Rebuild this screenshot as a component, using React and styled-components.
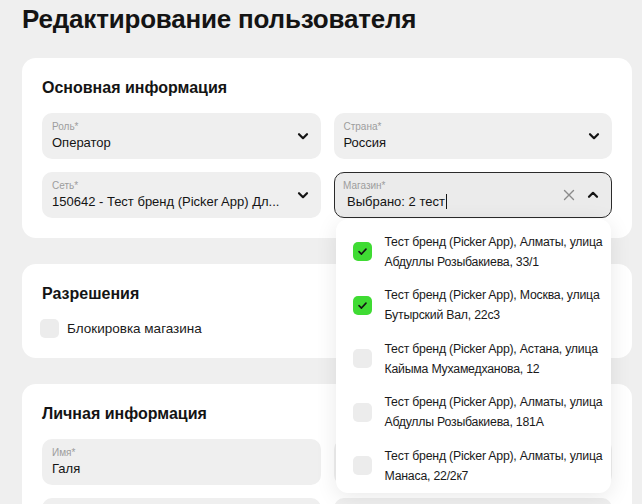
import React from "react";
import styled, { createGlobalStyle } from "styled-components";

const GlobalStyle = createGlobalStyle`
  html, body {
    margin: 0;
    padding: 0;
    background: #efefef;
    font-family: "Liberation Sans", Arial, sans-serif;
    color: #151515;
    overflow: hidden;
  }
`;

const STORES = [
  { name: "Тест бренд (Picker App), Алматы, улица", addr: "Абдуллы Розыбакиева, 33/1", checked: true },
  { name: "Тест бренд (Picker App), Москва, улица", addr: "Бутырский Вал, 22с3", checked: true },
  { name: "Тест бренд (Picker App), Астана, улица", addr: "Кайыма Мухамедханова, 12", checked: false },
  { name: "Тест бренд (Picker App), Алматы, улица", addr: "Абдуллы Розыбакиева, 181А", checked: false },
  { name: "Тест бренд (Picker App), Алматы, улица", addr: "Манаса, 22/2к7", checked: false },
];

const Page = styled.div`
  padding: 0 10px 0 22px;
`;

const Title = styled.h1`
  margin: 3px 0 23px;
  font-size: 26px;
  line-height: 32px;
  font-weight: 700;
  letter-spacing: -0.2px;
  color: #141414;
`;

const Card = styled.section`
  background: #fff;
  border-radius: 14px;
  padding: 20px;
  margin-bottom: 26px;
`;

const CardTitle = styled.h2`
  margin: 0 0 15px;
  font-size: 16px;
  line-height: 20px;
  font-weight: 700;
  color: #141414;
`;

const Grid = styled.div`
  display: grid;
  grid-template-columns: 1fr 1fr;
  gap: 13px;
`;

const FieldWrap = styled.div`
  position: relative;
`;

const Field = styled.div`
  height: 46px;
  box-sizing: border-box;
  display: flex;
  align-items: center;
  gap: 10px;
  padding: 0 11px 0 10px;
  border-radius: 10px;
  background: ${(p) => (p.$active ? "#ebebeb" : "#efefef")};
  border: ${(p) => (p.$active ? "1.5px solid #2b2b2b" : "none")};
  padding-left: ${(p) => (p.$active ? "8.5px" : "10px")};
`;

const FieldText = styled.div`
  flex: 1;
  min-width: 0;
  display: flex;
  flex-direction: column;
  gap: 2px;
`;

const Label = styled.span`
  font-size: 10px;
  line-height: 12px;
  color: #9d9d9d;
`;

const Value = styled.span`
  font-size: 13px;
  line-height: 16px;
  color: #141414;
  white-space: nowrap;
  overflow: hidden;
  text-overflow: ellipsis;
  padding-left: ${(p) => (p.$inset ? "4px" : "0")};
`;

const Caret = styled.span`
  display: inline-block;
  width: 1px;
  height: 15px;
  background: #141414;
  vertical-align: -3px;
  margin-left: 1px;
`;

const IconBtn = styled.span`
  display: flex;
  align-items: center;
  justify-content: center;
  width: 14px;
  height: 14px;
  color: ${(p) => p.$color || "#141414"};
`;

const Dropdown = styled.div`
  position: absolute;
  top: calc(100% + 1px);
  left: 2px;
  right: 1px;
  background: #fff;
  border-radius: 12px;
  box-shadow: 0 4px 22px rgba(0, 0, 0, 0.09);
  padding: 6px 0 0;
  z-index: 10;
`;

const Option = styled.div`
  display: flex;
  align-items: center;
  gap: 13px;
  padding: 6.75px 8px 6.75px 17px;
`;

const Box = styled.span`
  flex: none;
  width: 19px;
  height: 19px;
  border-radius: 5px;
  background: ${(p) => (p.$checked ? "#3fdb33" : "#ececec")};
  display: flex;
  align-items: center;
  justify-content: center;
`;

const OptionText = styled.div`
  font-size: 12.3px;
  line-height: 20px;
  letter-spacing: -0.22px;
  color: #1a1a1a;
  white-space: nowrap;
`;

const CheckRow = styled.label`
  display: flex;
  align-items: center;
  gap: 8px;
  margin-left: -2px;
  font-size: 13.5px;
  color: #1a1a1a;
`;

const ChevronDown = () => (
  <svg width="12" height="12" viewBox="0 0 12 12" fill="none">
    <path d="M2 4.2L6 8.2L10 4.2" stroke="currentColor" strokeWidth="2.2" strokeLinecap="round" strokeLinejoin="round" />
  </svg>
);

const ChevronUp = () => (
  <svg width="12" height="12" viewBox="0 0 12 12" fill="none">
    <path d="M2 7.8L6 3.8L10 7.8" stroke="currentColor" strokeWidth="2.2" strokeLinecap="round" strokeLinejoin="round" />
  </svg>
);

const Cross = () => (
  <svg width="12" height="12" viewBox="0 0 12 12" fill="none">
    <path d="M1.5 1.5L10.5 10.5M10.5 1.5L1.5 10.5" stroke="currentColor" strokeWidth="1.4" strokeLinecap="round" />
  </svg>
);

const Tick = () => (
  <svg width="11" height="11" viewBox="0 0 12 12" fill="none">
    <path d="M2.2 6.2L4.9 8.8L9.8 3.4" stroke="#151515" strokeWidth="1.8" strokeLinecap="round" strokeLinejoin="round" />
  </svg>
);

function Select({ label, value, plain }) {
  return (
    <FieldWrap>
      <Field>
        <FieldText>
          <Label>{label}</Label>
          <Value>{value}</Value>
        </FieldText>
        {!plain && (
          <IconBtn>
            <ChevronDown />
          </IconBtn>
        )}
      </Field>
    </FieldWrap>
  );
}

export default function App() {
  return (
    <Page>
      <GlobalStyle />
      <Title>Редактирование пользователя</Title>

      <Card>
        <CardTitle>Основная информация</CardTitle>
        <Grid>
          <Select label="Роль*" value="Оператор" />
          <Select label="Страна*" value="Россия" />
          <Select label="Сеть*" value="150642 - Тест бренд (Picker App) Дл..." />
          <FieldWrap>
            <Field $active>
              <FieldText>
                <Label>Магазин*</Label>
                <Value $inset>
                  Выбрано: 2 тест<Caret />
                </Value>
              </FieldText>
              <IconBtn $color="#8a8a8a">
                <Cross />
              </IconBtn>
              <IconBtn>
                <ChevronUp />
              </IconBtn>
            </Field>
            <Dropdown>
              {STORES.map((s, i) => (
                <Option key={i}>
                  <Box $checked={s.checked}>{s.checked && <Tick />}</Box>
                  <OptionText>
                    {s.name}
                    <br />
                    {s.addr}
                  </OptionText>
                </Option>
              ))}
            </Dropdown>
          </FieldWrap>
        </Grid>
      </Card>

      <Card>
        <CardTitle>Разрешения</CardTitle>
        <CheckRow>
          <Box />
          Блокировка магазина
        </CheckRow>
      </Card>

      <Card>
        <CardTitle>Личная информация</CardTitle>
        <Grid>
          <Select label="Имя*" value="Галя" plain />
          <Select label="Фамилия*" value="Тестова" plain />
          <Select label="Телефон*" value="+7 999 000-00-00" plain />
          <Select label="Email" value="" plain />
        </Grid>
      </Card>
    </Page>
  );
}
